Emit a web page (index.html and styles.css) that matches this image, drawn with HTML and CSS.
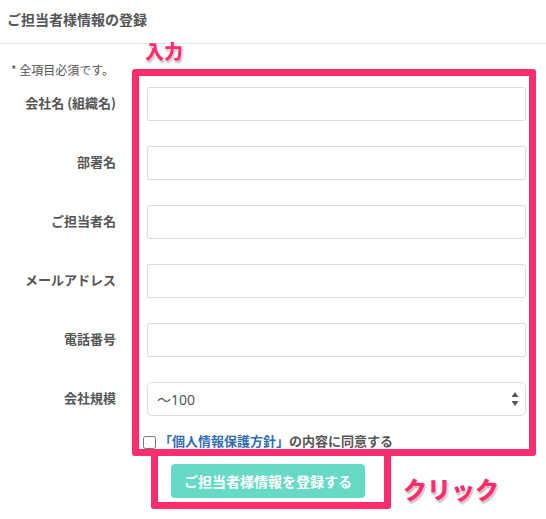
FILE: index.html
```html
<!DOCTYPE html>
<html lang="ja">
  <head>
    <meta charset="UTF-8" />
    <meta name="viewport" content="width=device-width, initial-scale=1.0" />
    <title>ご担当者様情報の登録</title>
    <link rel="stylesheet" href="styles.css">
  </head>
  <body>
    <div class="page">
      <div class="header">ご担当者様情報の登録</div>

      <form class="entry-form">
        <p class="note">* 全項目必須です。</p>

        <div class="fields">
          <label class="field-label">会社名 (組織名)</label>
          <input class="field-input" type="text" />

          <label class="field-label">部署名</label>
          <input class="field-input" type="text" />

          <label class="field-label">ご担当者名</label>
          <input class="field-input" type="text" />

          <label class="field-label">メールアドレス</label>
          <input class="field-input" type="text" />

          <label class="field-label">電話番号</label>
          <input class="field-input" type="text" />

          <label class="field-label">会社規模</label>
          <div class="select-wrap">
            <select class="field-select">
              <option>〜100</option>
              <option>101〜500</option>
              <option>501〜</option>
            </select>
            <svg class="select-arrows" width="8" height="14" viewBox="0 0 8 14">
              <path d="M4 0 L7.5 5 L0.5 5 Z" fill="#555" />
              <path d="M4 14 L7.5 9 L0.5 9 Z" fill="#555" />
            </svg>
          </div>
        </div>

        <div class="agree">
          <input class="agree-check" type="checkbox" />
          <span><a class="policy-link" href="#">「個人情報保護方針」</a>の内容に同意する</span>
        </div>

        <button class="submit" type="button">ご担当者様情報を登録する</button>
      </form>

      <!-- annotations drawn over the form -->
      <div class="mark mark-input"></div>
      <div class="mark mark-click"></div>
      <span class="mark-text text-input">入力</span>
      <span class="mark-text text-click">クリック</span>
    </div>
  </body>
</html>
```

FILE: styles.css
```css
body {
  margin: 0;
  font-family: "Noto Sans CJK JP", "Noto Sans", sans-serif;
  color: #555;
  background: #fff;
}

.page {
  position: relative;
  width: 546px;
  height: 519px;
  overflow: hidden;
}

.header {
  box-sizing: border-box;
  height: 44px;
  padding: 10px 7px 0;
  font-size: 14px;
  line-height: 18px;
  font-weight: bold;
  border-bottom: 1px solid #e6e6e6;
}

.entry-form {
  margin: 0;
}

.note {
  margin: 18px 0 0;
  padding-left: 11px;
  font-size: 12px;
  line-height: 16px;
}

.fields {
  display: grid;
  grid-template-columns: 116px 379px;
  grid-auto-rows: 34px;
  column-gap: 31px;
  row-gap: 25px;
  margin-top: 9px;
}

.field-label {
  display: flex;
  align-items: center;
  justify-content: flex-end;
  padding-bottom: 3px;
  font-size: 13px;
  line-height: 16px;
  font-weight: bold;
  white-space: nowrap;
}

.field-input {
  box-sizing: border-box;
  width: 100%;
  height: 34px;
  margin: 0;
  border: 1px solid #ddd;
  border-radius: 2px;
  background: #fff;
}

.select-wrap {
  position: relative;
}

.field-select {
  box-sizing: border-box;
  width: 100%;
  height: 34px;
  margin: 0;
  padding: 0 9px;
  border: 1px solid #ddd;
  border-radius: 5px;
  background: #fff;
  color: #555;
  font-family: "Noto Sans", "Noto Sans CJK JP", sans-serif;
  font-size: 14px;
  appearance: none;
  -webkit-appearance: none;
}

.select-arrows {
  position: absolute;
  right: 7px;
  top: 10px;
}

.agree {
  display: flex;
  align-items: center;
  margin: 16px 0 0 143px;
  font-size: 13px;
  line-height: 18px;
  font-weight: bold;
}

.agree-check {
  width: 13px;
  height: 13px;
  margin: 2px 3px 0 0;
}

.policy-link {
  color: #2f6db5;
  text-decoration: none;
}

.submit {
  display: block;
  width: 194px;
  height: 34px;
  margin: 14px 0 0 171px;
  border: none;
  border-radius: 4px;
  background: #66dac4;
  color: #fff;
  font-family: "Noto Sans CJK JP", sans-serif;
  font-size: 14px;
  font-weight: bold;
}

/* pink annotation boxes */
.mark {
  position: absolute;
  box-sizing: border-box;
  border: 7px solid #ff2d6e;
  border-radius: 3px;
}
.mark-input {
  left: 132px;
  top: 69px;
  width: 404px;
  height: 387px;
}
.mark-click {
  left: 151px;
  top: 449px;
  width: 240px;
  height: 60px;
  border-top: none;
}

.mark-text {
  position: absolute;
  color: #ff2d6e;
  font-weight: 900;
  line-height: 1;
  text-shadow: 0 0 2px #fff, 0 0 2px #fff, 1px 2px 2px rgba(0, 0, 0, 0.35);
}
.text-input {
  left: 145px;
  top: 41px;
  font-size: 19px;
}
.text-click {
  left: 403px;
  top: 477px;
  font-size: 24px;
}
```
